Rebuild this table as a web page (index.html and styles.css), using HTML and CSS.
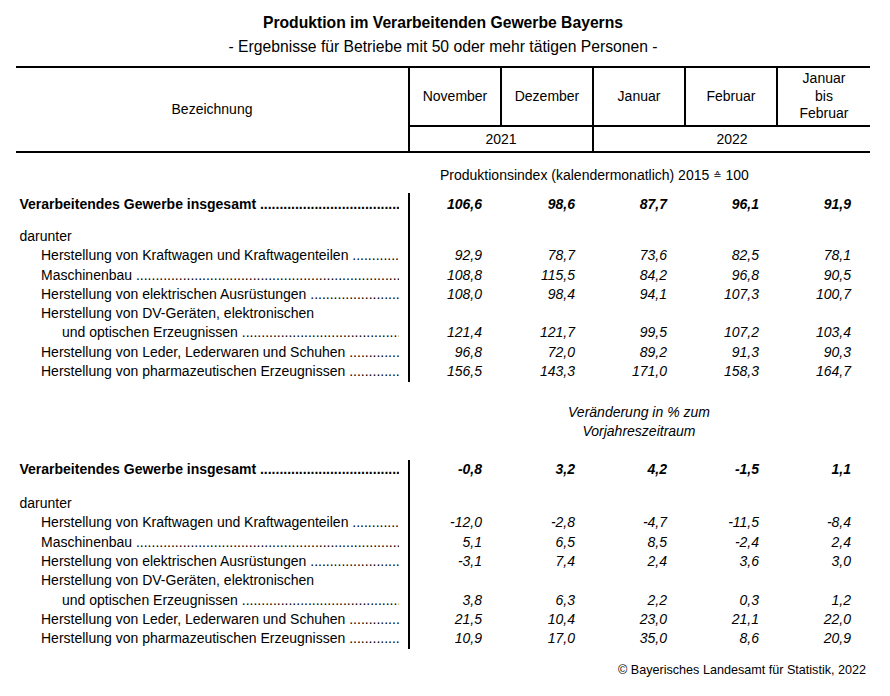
FILE: index.html
```html
<!DOCTYPE html>
<html lang="de">
<head>
<meta charset="utf-8">
<title>Produktion im Verarbeitenden Gewerbe Bayerns</title>
<link rel="stylesheet" href="styles.css">
</head>
<body>
<div class="page">
  <header class="titles">
    <h1 class="title">Produktion im Verarbeitenden Gewerbe Bayerns</h1>
    <p class="subtitle">- Ergebnisse für Betriebe mit 50 oder mehr tätigen Personen -</p>
  </header>

  <div class="table">
    <div class="head">
      <div class="h-label">Bezeichnung</div>
      <div class="h-month">November</div>
      <div class="h-month">Dezember</div>
      <div class="h-month">Januar</div>
      <div class="h-month">Februar</div>
      <div class="h-month h-multi">Januar<br>bis<br>Februar</div>
      <div class="h-year h-y1">2021</div>
      <div class="h-year h-y2">2022</div>
    </div>

    <div class="caption caption-index">Produktionsindex (kalendermonatlich) 2015 <span class="corr">≙</span> 100</div>

    <div class="section s1">
      <div class="row total"><div class="lbl"><span class="name">Verarbeitendes Gewerbe insgesamt</span><span class="lead"></span></div><div class="num">106,6</div><div class="num">98,6</div><div class="num">87,7</div><div class="num">96,1</div><div class="num">91,9</div></div>
      <div class="row"><div class="lbl"><span class="name">darunter</span></div><div class="num"></div><div class="num"></div><div class="num"></div><div class="num"></div><div class="num"></div></div>
      <div class="row"><div class="lbl ind1"><span class="name">Herstellung von Kraftwagen und Kraftwagenteilen</span><span class="lead"></span></div><div class="num">92,9</div><div class="num">78,7</div><div class="num">73,6</div><div class="num">82,5</div><div class="num">78,1</div></div>
      <div class="row"><div class="lbl ind1"><span class="name">Maschinenbau</span><span class="lead"></span></div><div class="num">108,8</div><div class="num">115,5</div><div class="num">84,2</div><div class="num">96,8</div><div class="num">90,5</div></div>
      <div class="row"><div class="lbl ind1"><span class="name">Herstellung von elektrischen Ausrüstungen</span><span class="lead"></span></div><div class="num">108,0</div><div class="num">98,4</div><div class="num">94,1</div><div class="num">107,3</div><div class="num">100,7</div></div>
      <div class="row"><div class="lbl ind1"><span class="name">Herstellung von DV-Geräten, elektronischen</span></div><div class="num"></div><div class="num"></div><div class="num"></div><div class="num"></div><div class="num"></div></div>
      <div class="row"><div class="lbl ind2"><span class="name">und optischen Erzeugnissen</span><span class="lead"></span></div><div class="num">121,4</div><div class="num">121,7</div><div class="num">99,5</div><div class="num">107,2</div><div class="num">103,4</div></div>
      <div class="row"><div class="lbl ind1"><span class="name">Herstellung von Leder, Lederwaren und Schuhen</span><span class="lead"></span></div><div class="num">96,8</div><div class="num">72,0</div><div class="num">89,2</div><div class="num">91,3</div><div class="num">90,3</div></div>
      <div class="row last"><div class="lbl ind1"><span class="name">Herstellung von pharmazeutischen Erzeugnissen</span><span class="lead"></span></div><div class="num">156,5</div><div class="num">143,3</div><div class="num">171,0</div><div class="num">158,3</div><div class="num">164,7</div></div>
    </div>

    <div class="caption caption-change">Veränderung in % zum<br>Vorjahreszeitraum</div>

    <div class="section s2">
      <div class="row total"><div class="lbl"><span class="name">Verarbeitendes Gewerbe insgesamt</span><span class="lead"></span></div><div class="num">-0,8</div><div class="num">3,2</div><div class="num">4,2</div><div class="num">-1,5</div><div class="num">1,1</div></div>
      <div class="row"><div class="lbl"><span class="name">darunter</span></div><div class="num"></div><div class="num"></div><div class="num"></div><div class="num"></div><div class="num"></div></div>
      <div class="row"><div class="lbl ind1"><span class="name">Herstellung von Kraftwagen und Kraftwagenteilen</span><span class="lead"></span></div><div class="num">-12,0</div><div class="num">-2,8</div><div class="num">-4,7</div><div class="num">-11,5</div><div class="num">-8,4</div></div>
      <div class="row"><div class="lbl ind1"><span class="name">Maschinenbau</span><span class="lead"></span></div><div class="num">5,1</div><div class="num">6,5</div><div class="num">8,5</div><div class="num">-2,4</div><div class="num">2,4</div></div>
      <div class="row"><div class="lbl ind1"><span class="name">Herstellung von elektrischen Ausrüstungen</span><span class="lead"></span></div><div class="num">-3,1</div><div class="num">7,4</div><div class="num">2,4</div><div class="num">3,6</div><div class="num">3,0</div></div>
      <div class="row"><div class="lbl ind1"><span class="name">Herstellung von DV-Geräten, elektronischen</span></div><div class="num"></div><div class="num"></div><div class="num"></div><div class="num"></div><div class="num"></div></div>
      <div class="row"><div class="lbl ind2"><span class="name">und optischen Erzeugnissen</span><span class="lead"></span></div><div class="num">3,8</div><div class="num">6,3</div><div class="num">2,2</div><div class="num">0,3</div><div class="num">1,2</div></div>
      <div class="row"><div class="lbl ind1"><span class="name">Herstellung von Leder, Lederwaren und Schuhen</span><span class="lead"></span></div><div class="num">21,5</div><div class="num">10,4</div><div class="num">23,0</div><div class="num">21,1</div><div class="num">22,0</div></div>
      <div class="row last"><div class="lbl ind1"><span class="name">Herstellung von pharmazeutischen Erzeugnissen</span><span class="lead"></span></div><div class="num">10,9</div><div class="num">17,0</div><div class="num">35,0</div><div class="num">8,6</div><div class="num">20,9</div></div>
    </div>
  </div>

  <footer class="source">© Bayerisches Landesamt für Statistik, 2022</footer>
</div>
</body>
</html>
```

FILE: styles.css
```css
* {
  box-sizing: border-box;
  margin: 0;
  padding: 0;
}

body {
  margin: 0;
  background: #ffffff;
  color: #000000;
  font-family: "Liberation Sans", Arial, sans-serif;
  font-size: 14px;
}

.page {
  width: 890px;
  height: 696px;
  padding: 11px 20px 0 16px;
}

/* Titles */
.titles {
  width: 854px;
  text-align: center;
  font-size: 15.7px;
  line-height: 24px;
}

.title {
  font-size: 15.7px;
  font-weight: bold;
}

.subtitle {
  font-size: 15.7px;
}

/* Table */
.table {
  width: 854px;
  margin-top: 7px;
}

.head {
  display: grid;
  grid-template-columns: 392px 92px 92px 92px 92px 94px;
  grid-template-rows: 59px 24px;
  border-top: 2px solid #000;
  border-bottom: 2px solid #000;
}

.h-label {
  grid-row: 1 / 3;
  display: flex;
  align-items: center;
  justify-content: center;
  padding-bottom: 2px;
}

.h-month {
  border-left: 2px solid #000;
  border-bottom: 2px solid #000;
  display: flex;
  align-items: center;
  justify-content: center;
  text-align: center;
  padding-bottom: 2px;
}

.h-multi {
  line-height: 17.5px;
  padding-bottom: 0;
}

.h-year {
  border-left: 2px solid #000;
  display: flex;
  align-items: center;
  justify-content: center;
}

.h-y1 {
  grid-column: 2 / 4;
}

.h-y2 {
  grid-column: 4 / 7;
}

/* Captions */
.caption {
  white-space: nowrap;
}

.caption-index {
  height: 40px;
  padding: 12.5px 0 0 424px;
  line-height: 19.2px;
}

.corr {
  font-family: "DejaVu Sans", sans-serif;
  font-size: 10px;
  vertical-align: 1px;
}

.caption-change {
  height: 78px;
  padding: 21.2px 0 0 392px;
  line-height: 18.5px;
  text-align: center;
  font-style: italic;
}

/* Sections */
.s1 {
  --rh: 19.25px;
  --pt: 1.85px;
  --gap: 13.1px;
  --pb: 0.8px;
}

.s2 {
  --rh: 19.4px;
  --pt: 0.45px;
  --gap: 13.9px;
  --pb: 0px;
}

.row {
  display: grid;
  grid-template-columns: 392px 92px 92px 92px 92px 94px;
  line-height: var(--rh);
  height: var(--rh);
}

.row.total {
  font-weight: bold;
  height: calc(var(--rh) + var(--pt) + var(--gap));
}

.row.total > * {
  padding-top: var(--pt);
}

.row.last {
  height: calc(var(--rh) + var(--pb));
}

.lbl {
  display: flex;
  white-space: nowrap;
  padding-left: 3.5px;
  padding-right: 9px;
  overflow: hidden;
}

.lbl.ind1 {
  padding-left: 25px;
}

.lbl.ind2 {
  padding-left: 46px;
}

.name {
  flex: none;
}

.lead {
  flex: 1 1 0;
  min-width: 0;
  margin-left: 3.9px;
  overflow: hidden;
  white-space: nowrap;
}

.lead::before {
  content: "........................................................................................................................................";
}

.num {
  font-style: italic;
  text-align: right;
  padding-right: 17px;
  white-space: nowrap;
}

.row > .num:nth-child(2) {
  border-left: 2px solid #000;
  padding-right: 18px;
}

.row > .num:last-child {
  padding-right: 19px;
}

/* Footer */
.source {
  width: 854px;
  margin-top: 13.6px;
  padding-right: 4px;
  text-align: right;
  font-size: 12.6px;
  line-height: 16px;
}
```
